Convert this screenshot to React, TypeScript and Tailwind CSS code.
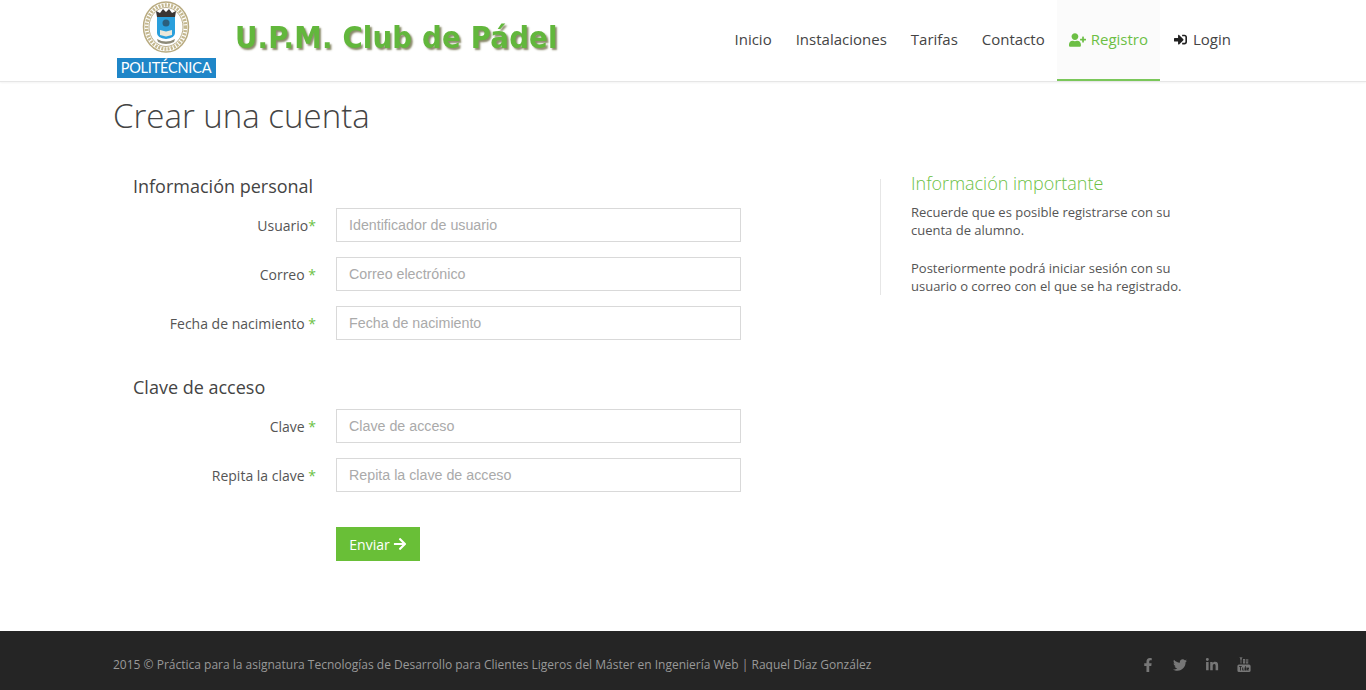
// App.tsx - registro U.P.M. Club de Pádel
import { FaUserPlus, FaArrowRight, FaFacebookF, FaTwitter, FaLinkedinIn, FaSignInAlt } from 'react-icons/fa';

const navItems = ['Inicio', 'Instalaciones', 'Tarifas', 'Contacto'];

const Logo = () => (
  <div className="w-[100px] h-[78px] ml-[3px] flex flex-col items-center">
    <svg width="52" height="54" viewBox="0 0 52 54" className="shrink-0 blur-[0.4px]">
      <ellipse cx="26" cy="27" rx="22.5" ry="25" fill="#fff" stroke="#b9ab80" strokeWidth="1.5" />
      <ellipse cx="26" cy="27" rx="19.5" ry="22" fill="none" stroke="#c4b88f" strokeWidth="3.5" strokeDasharray="2 1.2" />
      <ellipse cx="26" cy="27" rx="17" ry="19.5" fill="#fff" stroke="#a99a6c" strokeWidth="0.8" />
      <path d="M17 17 L16 11 L20 13 L23 9 L26 12 L29 9 L32 13 L36 11 L35 17 Z" fill="#3a3533" />
      <path d="M17 17 H35 V33 Q35 38 26 39 Q17 38 17 33 Z" fill="#2a9fdc" />
      <circle cx="26" cy="23" r="3.5" fill="#2b5f7d" />
      <path d="M20 30 L26 31.5 L32 30 V35 L26 36.5 L20 35 Z" fill="#ece8da" />
      <path d="M17 39 Q26 44 35 39 L34 42 Q26 46 18 42 Z" fill="#8d8a78" />
    </svg>
    <div className="mt-[4px] w-[99px] h-5 bg-[#1f86c8] text-white text-[14.5px] leading-5 text-center font-['Lato',sans-serif] tracking-[-0.2px]">
      POLITÉCNICA
    </div>
  </div>
);

const Header = () => (
  <header className="h-[82px] bg-white border-b border-[#e6e6e6] shadow-[0_1px_2px_rgba(0,0,0,0.05)]">
    <div className="w-[1140px] mx-auto h-[81px] flex items-start justify-between">
      <div className="flex items-start">
        <Logo />
        <span className="ml-[19px] mt-[17px] text-[30px] leading-[42px] font-bold text-[#62b73c] tracking-[0.2px] font-['DejaVu_Sans',sans-serif] [text-shadow:2px_2px_2px_#8a8a6a] whitespace-nowrap scale-x-[0.92] origin-left">
          U.P.M. Club de Pádel
        </span>
      </div>
      <nav className="flex h-[81px] mr-[10px] text-[15px] text-[#444]">
        {navItems.map((item) => (
          <a key={item} className="px-3 pt-[29px] leading-[20px]">{item}</a>
        ))}
        <a className="px-3 pt-[29px] leading-[20px] bg-[#fbfbfb] border-b-2 border-[#7ac75a] text-[#6cbf45] flex items-start gap-[5px] h-[81px]">
          <FaUserPlus className="text-[16px] mt-[3px] w-[17px]" />
          Registro
        </a>
        <a className="px-3 pt-[29px] leading-[20px] flex items-start gap-[6px] pl-[14px]">
          <FaSignInAlt className="text-[13px] mt-[4px] text-[#222]" />
          Login
        </a>
      </nav>
    </div>
  </header>
);

const Field = ({ label, spaced = true, placeholder }: { label: string; spaced?: boolean; placeholder: string }) => (
  <div className="flex items-center gap-5 h-[34px] mb-[15px]">
    <label className="w-[203px] text-right text-[14px] text-[#555]">
      {label}{spaced ? ' ' : ''}<span className="text-[#6cbf45]">*</span>
    </label>
    <input
      type="text"
      placeholder={placeholder}
      className="w-[405px] h-[34px] px-3 border border-[#d9d9d9] bg-white text-[14.25px] font-['Liberation_Sans',sans-serif] placeholder:text-[#aaa] outline-none"
    />
  </div>
);

const Footer = () => (
  <footer className="h-[59px] bg-[#252525]">
    <div className="w-[1140px] mx-auto h-full pt-2 flex items-center justify-between text-[12px] text-[#999]">
      <span>2015 © Práctica para la asignatura Tecnologías de Desarrollo para Clientes Ligeros del Máster en Ingeniería Web | Raquel Díaz González</span>
      <div className="flex items-center gap-[18px] mr-[2px] text-[14px] text-[#777]">
        <FaFacebookF className="w-[14px]" />
        <FaTwitter className="w-[14px]" />
        <FaLinkedinIn className="w-[14px]" />
        <svg width="14" height="15" viewBox="0 0 14 15" fill="currentColor">
          <path fillRule="evenodd" d="M2 7.5H12A1.6 1.6 0 0 1 13.6 9V13.4A1.6 1.6 0 0 1 12 15H2A1.6 1.6 0 0 1 .4 13.4V9A1.6 1.6 0 0 1 2 7.5ZM2 9V9.8H3V13.6H3.9V9.8H4.9V9ZM5.2 10.4V13.2L6 13.6L6.8 13.2V13.6H7.5V10.4H6.8V12.8H6V10.4ZM8 9V13.6H8.7L9.6 13.4V10.6L8.7 10.4V9ZM10 10.8V13.2L10.8 13.6L12 13.2V12.7H11V12.3H12V10.8L11 10.4Z" />
          <path d="M2.6 0H3.5L4 1.9L4.5 0H5.4L4.4 3.2V6.4H3.6V3.2Z" />
          <path fillRule="evenodd" d="M6 2H8V6.4H6ZM6.8 2.8V5.6H7.2V2.8Z" />
          <path d="M8.8 2H9.6V5.6H10.4V2H11.2V6.4H8.8Z" />
        </svg>
      </div>
    </div>
  </footer>
);

export default function App() {
  return (
    <div className="h-[690px] flex flex-col bg-white font-['Open_Sans',sans-serif] text-[#555]">
      <Header />
      <main className="flex-1 w-[1140px] mx-auto">
        <h1 className="mt-[13px] text-[33px] leading-[42px] font-light text-[#444]">Crear una cuenta</h1>
        <div className="flex mt-[34px]">
          <form className="w-[767px] shrink-0">
            <h2 className="pl-5 mt-[3px] mb-[9px] text-[18px] leading-[25px] text-[#444]">Información personal</h2>
            <Field label="Usuario" spaced={false} placeholder="Identificador de usuario" />
            <Field label="Correo" placeholder="Correo electrónico" />
            <Field label="Fecha de nacimiento" placeholder="Fecha de nacimiento" />
            <h2 className="pl-5 mt-[35px] mb-[9px] text-[18px] leading-[25px] text-[#444]">Clave de acceso</h2>
            <Field label="Clave" placeholder="Clave de acceso" />
            <Field label="Repita la clave" placeholder="Repita la clave de acceso" />
            <button type="button" className="ml-[223px] mt-[35px] h-[34px] w-[84px] bg-[#69bf37] text-white text-[14px] flex items-center justify-center gap-[3px]">
              Enviar <FaArrowRight className="text-[14px]" />
            </button>
          </form>
          <aside className="mt-2 border-l border-[#e6e6e6] pl-[30px] h-[116px] w-[330px]">
            <h3 className="text-[18px] leading-[8px] font-light text-[#6cbf45]">Información importante</h3>
            <p className="mt-4 text-[13px] leading-[18px]">Recuerde que es posible registrarse con su cuenta de alumno.</p>
            <p className="mt-5 text-[13px] leading-[18px]">Posteriormente podrá iniciar sesión con su usuario o correo con el que se ha registrado.</p>
          </aside>
        </div>
      </main>
      <Footer />
    </div>
  );
}
